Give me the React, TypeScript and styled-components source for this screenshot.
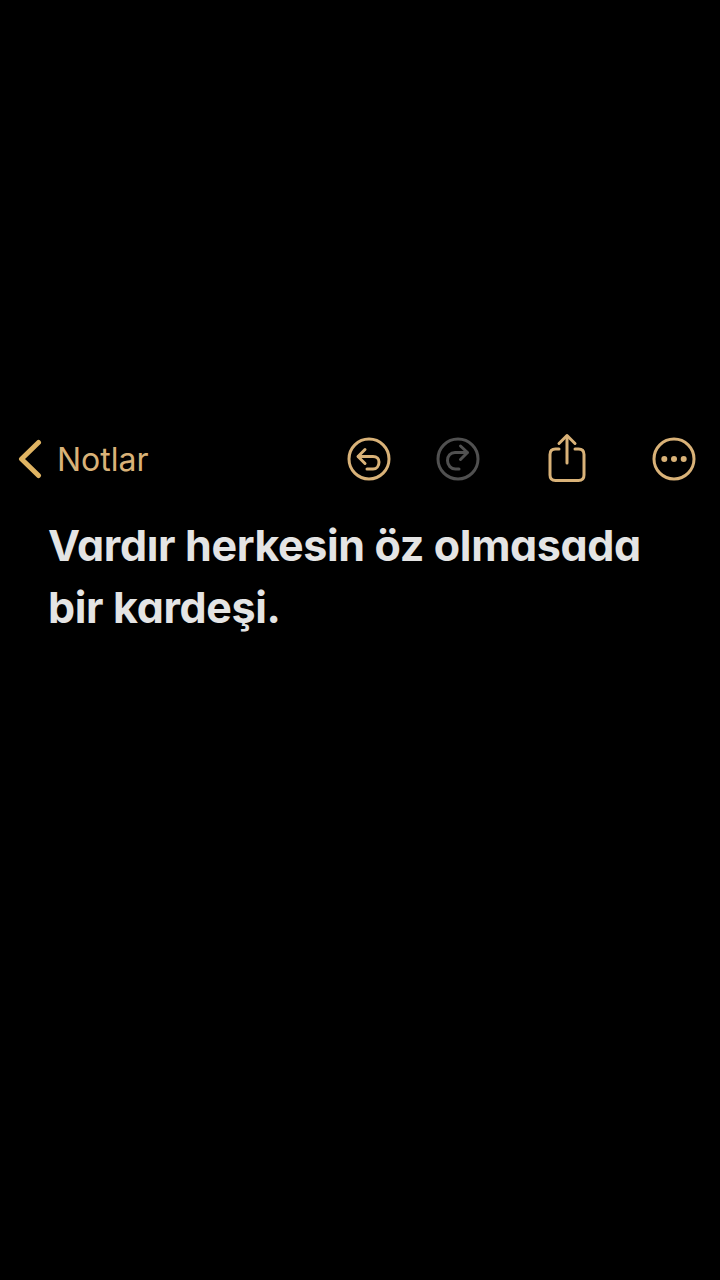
import styled, { createGlobalStyle } from 'styled-components';

const GlobalStyle = createGlobalStyle`
  html,
  body {
    margin: 0;
    padding: 0;
    background: #000;
  }
`;

const ACCENT = '#d9b278';
const MUTED = '#505050';

export default function App() {
  return (
    <Page>
      <GlobalStyle />
      <Toolbar>
        <BackLink>
          <svg width="26" height="40" viewBox="0 0 26 40" fill="none">
            <path
              d="M21.5 3.5 L4.5 20 L21.5 36.5"
              stroke="#e0b462"
              strokeWidth="5"
              strokeLinecap="round"
              strokeLinejoin="round"
            />
          </svg>
          <BackLabel>Notlar</BackLabel>
        </BackLink>
        <Actions>
          <IconSlot>
            <svg width="44" height="44" viewBox="0 0 44 44" fill="none" stroke={ACCENT} strokeWidth="3" strokeLinecap="round" strokeLinejoin="round">
              <circle cx="22" cy="22" r="20" />
              <path d="M18 12.5 L11 19.5 L18 26.5" />
              <path d="M11.5 19.5 H26 C30 19.5 32 22 32 25 C32 29 29.5 32 26 32 H20" />
            </svg>
          </IconSlot>
          <IconSlot $gap={45}>
            <svg width="44" height="44" viewBox="0 0 44 44" fill="none" stroke={MUTED} strokeWidth="3" strokeLinecap="round" strokeLinejoin="round">
              <circle cx="22" cy="22" r="20" />
              <path d="M24.5 9 L31.5 15.5 L24.5 22.5" />
              <path d="M31 15.5 H19 C14.5 15.5 11.5 19 11.5 23.5 C11.5 28.5 15 32 19.5 32 H23" />
            </svg>
          </IconSlot>
          <IconSlot $gap={68}>
            <svg width="38" height="52" viewBox="0 0 38 52" fill="none" stroke={ACCENT} strokeWidth="3" strokeLinecap="round" strokeLinejoin="round">
              <path d="M11 16 H7.5 C4 16 2 18 2 21.5 V42 C2 45.5 4 47.5 7.5 47.5 H30.5 C34 47.5 36 45.5 36 42 V21.5 C36 18 34 16 30.5 16 H27" />
              <path d="M19 30 V3" />
              <path d="M11 10.5 L19 2.5 L27 10.5" />
            </svg>
          </IconSlot>
          <IconSlot $gap={66}>
            <svg width="44" height="44" viewBox="0 0 44 44" fill="none">
              <circle cx="22" cy="22" r="20" stroke={ACCENT} strokeWidth="3" />
              <circle cx="12.3" cy="22" r="3" fill={ACCENT} />
              <circle cx="22" cy="22" r="3" fill={ACCENT} />
              <circle cx="31.7" cy="22" r="3" fill={ACCENT} />
            </svg>
          </IconSlot>
        </Actions>
      </Toolbar>
      <Note>
        Vardır herkesin öz olmasada
        <br />
        bir kardeşi.
      </Note>
    </Page>
  );
}

const Page = styled.main`
  box-sizing: border-box;
  width: 720px;
  height: 1280px;
  padding-top: 432px;
  overflow: hidden;

  background: #000;
  font-family: Inter, 'Liberation Sans', sans-serif;
`;

const Toolbar = styled.header`
  display: flex;
  align-items: center;
  justify-content: space-between;

  height: 54px;
  padding-right: 24px;
  padding-left: 17px;
`;

const BackLink = styled.div`
  display: flex;
  align-items: center;
  column-gap: 14px;
`;

const BackLabel = styled.span`
  font-size: 32px;
  font-weight: 400;
  color: ${ACCENT};
`;

const Actions = styled.div`
  display: flex;
  align-items: center;
`;

const IconSlot = styled.span<{ $gap?: number }>`
  display: flex;
  align-items: center;
  justify-content: center;

  margin-left: ${({ $gap }) => $gap ?? 0}px;
`;

const Note = styled.p`
  margin: 28px 0 0;
  padding-left: 48px;

  font-size: 43px;
  font-weight: 700;
  font-feature-settings: 'cv11';
  letter-spacing: -0.36px;
  line-height: 62px;
  color: #e4e4e4;
`;
